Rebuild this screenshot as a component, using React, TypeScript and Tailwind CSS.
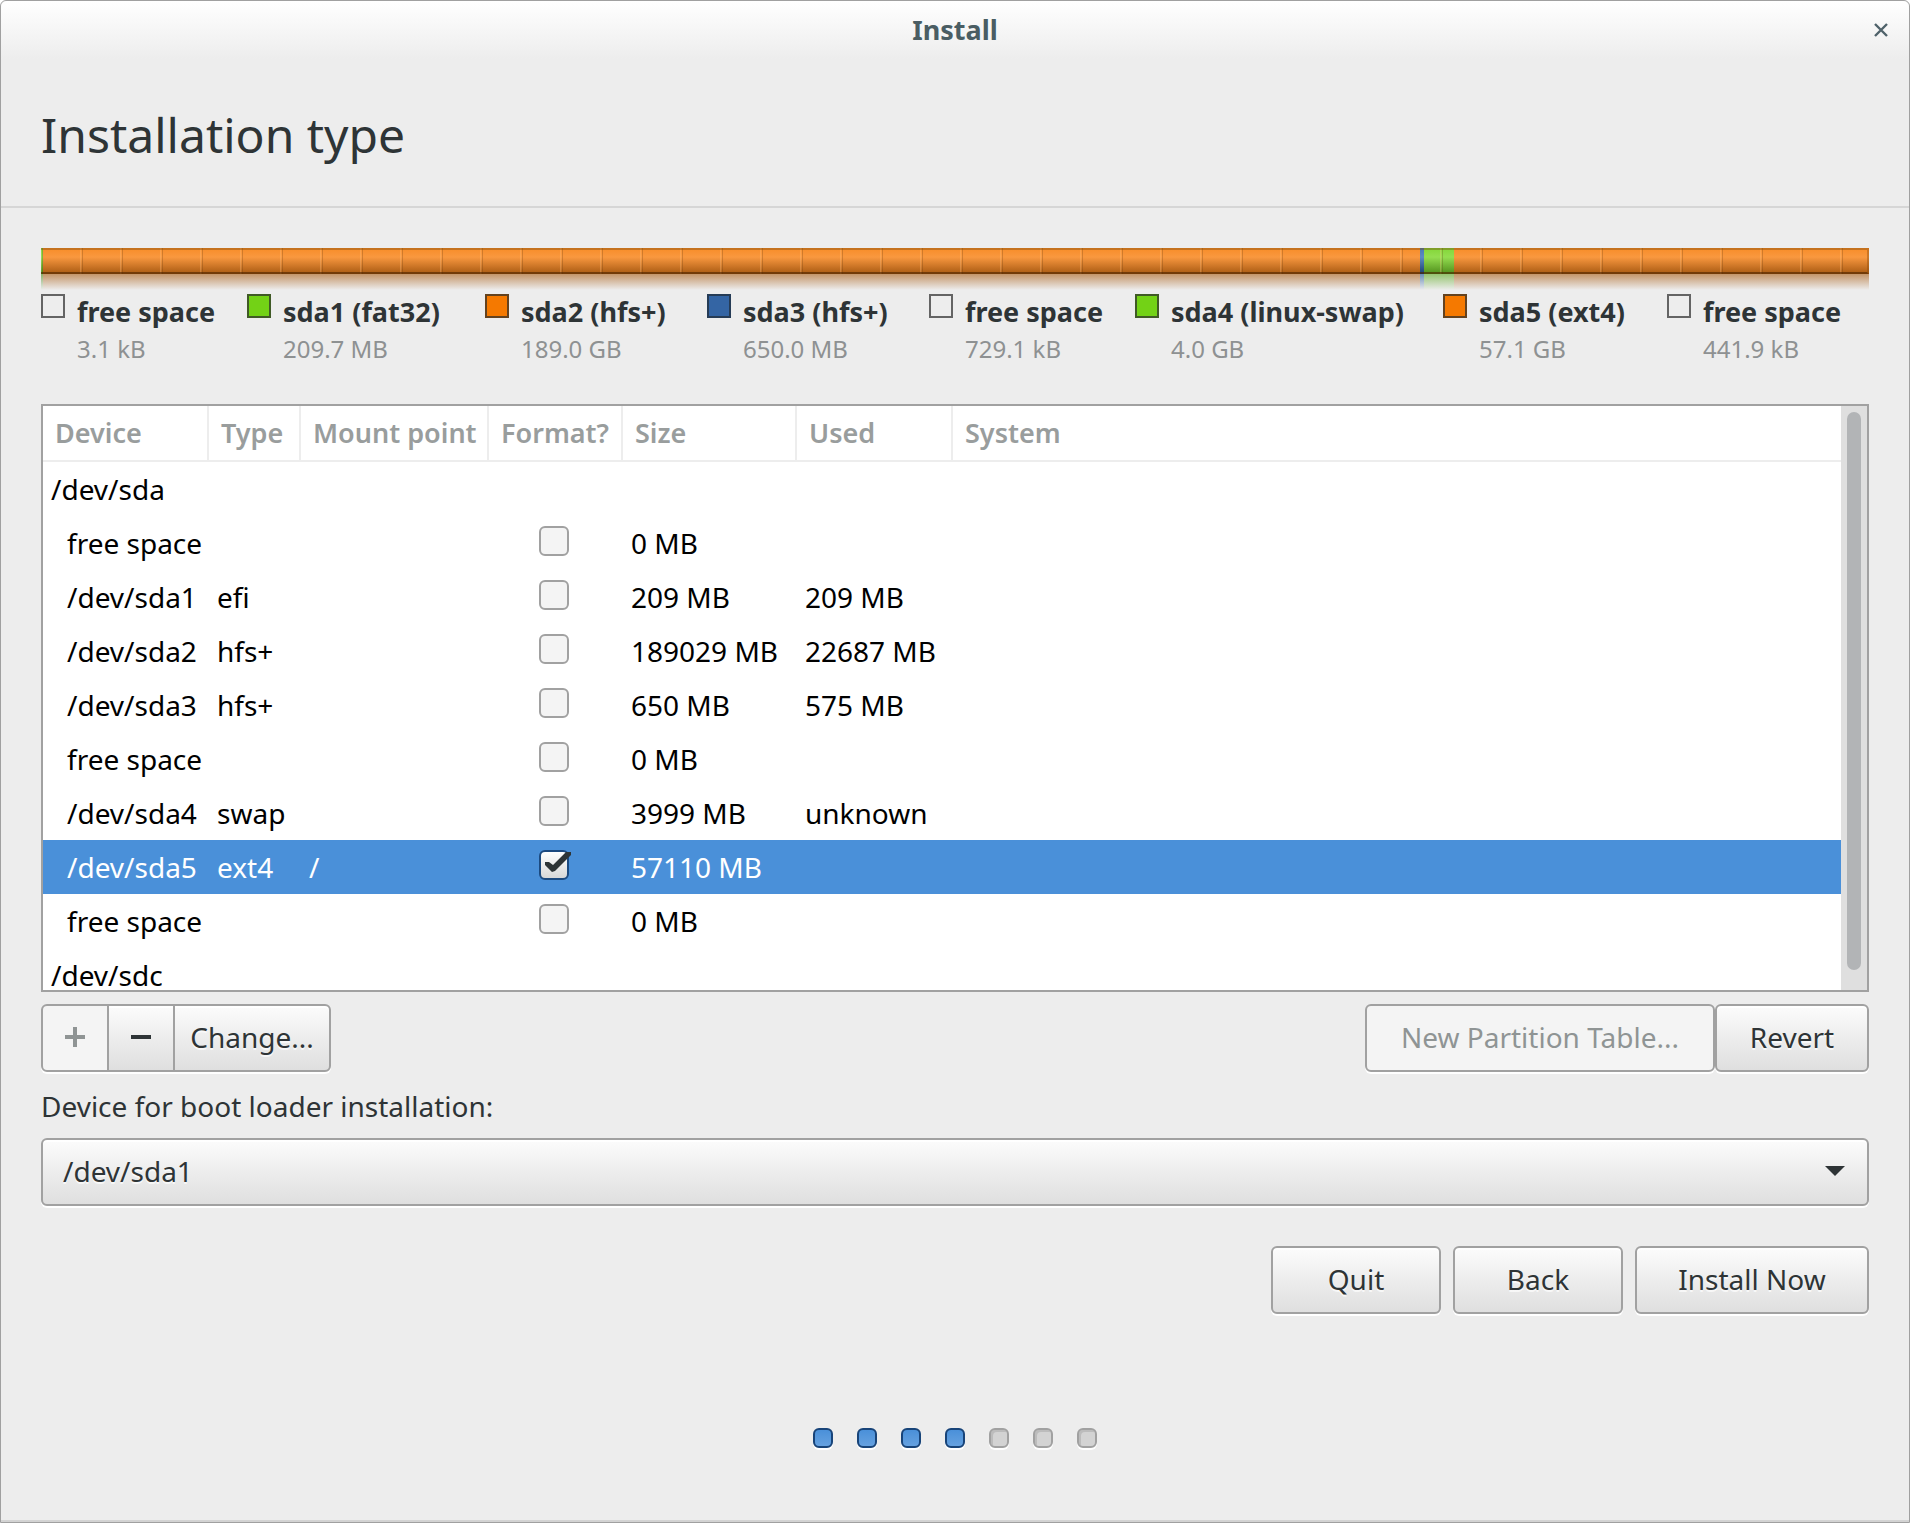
import React from "react";

const BUTTON =
  "h-[68px] rounded-md border-2 border-[#a1a1a1] bg-linear-to-b from-[#fcfcfc] via-[#ededed] to-[#dfdfdf] pb-0.5 text-[#2e3436] shadow-[0_2px_0_#fff,inset_0_2px_0_#fff] [text-shadow:0_2px_0_rgba(255,255,255,0.7)]";
const BUTTON_OFF =
  "h-[68px] rounded-md border-2 border-[#a1a1a1] bg-[#f4f4f4] pb-0.5 text-[#8f9494] shadow-[0_2px_0_#fff]";

const legend = [
  { name: "free space", size: "3.1 kB", color: "bg-transparent border-[#646464]" },
  { name: "sda1 (fat32)", size: "209.7 MB", color: "bg-[#73d216] border-[#405a26]" },
  { name: "sda2 (hfs+)", size: "189.0 GB", color: "bg-[#f57900] border-[#63421f]" },
  { name: "sda3 (hfs+)", size: "650.0 MB", color: "bg-[#3465a4] border-[#263c56]" },
  { name: "free space", size: "729.1 kB", color: "bg-transparent border-[#646464]" },
  { name: "sda4 (linux-swap)", size: "4.0 GB", color: "bg-[#73d216] border-[#405a26]" },
  { name: "sda5 (ext4)", size: "57.1 GB", color: "bg-[#f57900] border-[#63421f]" },
  { name: "free space", size: "441.9 kB", color: "bg-transparent border-[#646464]" },
];

const ORANGE = "bg-linear-to-b from-[#f78c26] via-[#f9983f] via-35% to-[#a85a10]";
const GREEN = "bg-linear-to-b from-[#83d636] via-[#94de50] via-35% to-[#508f1a]";
const BLUE = "bg-linear-to-b from-[#4a79b4] via-[#5c8bc4] via-35% to-[#1d4071]";

const segments = [
  { share: 2, body: GREEN, glow: "from-[#488712]/60" },
  { share: 1377, body: ORANGE, glow: "from-[#a85a10]/60" },
  { share: 4, body: BLUE, glow: "from-[#3465a4]/70" },
  { share: 30, body: GREEN, glow: "from-[#5aa81c]/60" },
  { share: 415, body: ORANGE, glow: "from-[#a85a10]/60" },
];

type Row = {
  device: string;
  root?: boolean;
  type?: string;
  mount?: string;
  checked?: boolean;
  size?: string;
  used?: string;
};

const rows: Row[] = [
  { device: "/dev/sda", root: true },
  { device: "free space", size: "0 MB" },
  { device: "/dev/sda1", type: "efi", size: "209 MB", used: "209 MB" },
  { device: "/dev/sda2", type: "hfs+", size: "189029 MB", used: "22687 MB" },
  { device: "/dev/sda3", type: "hfs+", size: "650 MB", used: "575 MB" },
  { device: "free space", size: "0 MB" },
  { device: "/dev/sda4", type: "swap", size: "3999 MB", used: "unknown" },
  { device: "/dev/sda5", type: "ext4", mount: "/", checked: true, size: "57110 MB" },
  { device: "free space", size: "0 MB" },
  { device: "/dev/sdc", root: true },
];

function TitleBar() {
  return (
    <header className="grid h-[58px] grid-cols-[1fr_auto_1fr] items-center rounded-t-md bg-linear-to-b from-white to-[#ededed] px-5">
      <span />
      <span className="text-[27px] leading-9 font-bold text-[#4a5d63]">Install</span>
      <button type="button" aria-label="Close" className="justify-self-end px-px py-0.5">
        <svg viewBox="0 0 14 14" className="size-3.5">
          <path d="M1 1 L13 13 M13 1 L1 13" stroke="#4f626a" strokeWidth="2.4" fill="none" />
        </svg>
      </button>
    </header>
  );
}

function DiskBar() {
  return (
    <div className="relative">
      <div className="flex">
        {segments.map((s, i) => (
          <div key={i} style={{ flex: `${s.share} 0 0px` }}>
            <div className={`h-[26px] ${s.body}`} />
            <div className={`h-4 bg-linear-to-b to-transparent ${s.glow}`} />
          </div>
        ))}
      </div>
      <div className="absolute inset-x-0 top-0 h-[26px] border-t-2 border-r-2 border-b-2 border-t-[#7a4a10]/40 border-r-[#8a4a08]/40 border-b-[#4c2400]/60 bg-[linear-gradient(90deg,transparent_37px,rgba(255,200,140,0.3)_37px_38px,rgba(255,200,140,0.1)_38px_39px,rgba(90,50,10,0.25)_39px_40px)] bg-[length:40px_100%] bg-[position:2px_0]" />
    </div>
  );
}

function Legend() {
  return (
    <ul className="mt-1 grid grid-cols-[206fr_238fr_222fr_222fr_206fr_308fr_224fr_202fr]">
      {legend.map((l, i) => (
        <li key={i} className="flex gap-3 whitespace-nowrap">
          <span className={`size-6 shrink-0 border-2 ${l.color}`} />
          <span className="flex flex-col">
            <span className="text-[27px] leading-9 font-bold text-[#2e3436]">{l.name}</span>
            <span className="text-[24px] leading-[38px] text-[#8e9192]">{l.size}</span>
          </span>
        </li>
      ))}
    </ul>
  );
}

function FormatBox({ row }: { row: Row }) {
  return (
    <span className="relative mx-auto block size-[30px]">
      <input
        type="checkbox"
        aria-label={`Format ${row.device}`}
        defaultChecked={row.checked}
        disabled={!row.checked}
        className="block size-[30px] appearance-none rounded-md border-2 border-[#a1a1a1] bg-[#f4f4f4] checked:border-[#1c4a80] checked:bg-linear-to-b checked:from-white checked:to-[#d8d8d8]"
      />
      {row.checked && (
        <svg viewBox="0 0 30 30" className="pointer-events-none absolute inset-0 size-[30px] overflow-visible">
          <path d="M6 12 H10 L14 15 L27 2 H32 V5 L16 21 L13 22 L6 15 Z" fill="#2e3436" />
        </svg>
      )}
    </span>
  );
}

function PartitionTable() {
  const heads = ["Device", "Type", "Mount point", "Format?", "Size", "Used", "System"];
  return (
    <div className="mt-9 flex h-[588px] overflow-hidden border-2 border-[#a1a1a1] bg-white">
      <div className="min-w-0 flex-1 overflow-hidden">
        <table className="w-full table-fixed border-separate border-spacing-0 text-left whitespace-nowrap">
          <colgroup>
            <col className="w-[166px]" />
            <col className="w-[92px]" />
            <col className="w-[188px]" />
            <col className="w-[134px]" />
            <col className="w-[174px]" />
            <col className="w-[156px]" />
            <col />
          </colgroup>
          <thead>
            <tr className="h-14 text-[27px] leading-9 text-[#999d9d]">
              {heads.map((h) => (
                <th
                  key={h}
                  className="border-r-2 border-b-2 border-[#ededed] p-0 pl-3 font-semibold last:border-r-0"
                >
                  {h}
                </th>
              ))}
            </tr>
          </thead>
          <tbody className="text-[28px] leading-9">
            {rows.map((r, i) => (
              <tr key={i} className={r.checked ? "h-[54px] bg-[#4a90d9] text-white" : "h-[54px] text-black"}>
                <td className={r.root ? "p-0 pl-2" : "p-0 pl-6"}>{r.device}</td>
                <td className="p-0 pl-2">{r.type}</td>
                <td className="p-0 pl-2">{r.mount}</td>
                <td className="p-0 pr-1 pb-1">{!r.root && <FormatBox row={r} />}</td>
                <td className="p-0 pl-2">{r.size}</td>
                <td className="p-0 pl-2">{r.used}</td>
                <td className="p-0" />
              </tr>
            ))}
          </tbody>
        </table>
      </div>
      <div className="w-[26px] shrink-0 bg-[#dfdfdf] px-1.5 pt-1.5 pb-5">
        <div className="h-full rounded-full bg-[#b2b4b6]" />
      </div>
    </div>
  );
}

export default function App() {
  return (
    <div className="flex min-h-screen flex-col rounded-t-md border border-[#a0a0a0] bg-[#ededed] font-['Noto_Sans',sans-serif] text-[28px] text-[#2e3436] shadow-[inset_0_-2px_0_#d3d3d3]">
      <TitleBar />
      <h1 className="border-b-2 border-[#d6d6d6] px-10 pt-11 pb-[39px] text-[48px] leading-[64px]">
        Installation type
      </h1>
      <main className="flex flex-col px-10 pt-10">
        <DiskBar />
        <Legend />
        <PartitionTable />

        <div className="mt-3 flex justify-between">
          <div className="flex">
            <button type="button" disabled aria-label="Add partition" className={`${BUTTON_OFF} flex w-[68px] items-center justify-center rounded-r-none`}>
              <svg viewBox="0 0 20 20" className="size-5">
                <path d="M8 0h4v8h8v4h-8v8h-4v-8h-8v-4h8z" fill="#8f9494" />
              </svg>
            </button>
            <button type="button" aria-label="Remove partition" className={`${BUTTON} -ml-0.5 flex w-[68px] items-center justify-center rounded-none`}>
              <svg viewBox="0 0 20 20" className="size-5">
                <path d="M0 8h20v4h-20z" fill="#2e3436" />
              </svg>
            </button>
            <button type="button" className={`${BUTTON} -ml-0.5 w-[158px] rounded-l-none`}>
              Change...
            </button>
          </div>
          <div className="flex">
            <button type="button" disabled className={`${BUTTON_OFF} w-[350px]`}>
              New Partition Table...
            </button>
            <button type="button" className={`${BUTTON} w-[154px]`}>
              Revert
            </button>
          </div>
        </div>

        <label htmlFor="boot-device" className="mt-4 leading-9">
          Device for boot loader installation:
        </label>
        <div className="relative mt-3.5">
          <select id="boot-device" className={`${BUTTON} block w-full appearance-none px-5`}>
            <option>/dev/sda1</option>
          </select>
          <svg viewBox="0 0 20 10" className="pointer-events-none absolute top-7 right-6 h-2.5 w-5">
            <path d="M0 0h20l-10 10z" fill="#2e3436" />
          </svg>
        </div>

        <div className="mt-10 flex justify-end gap-3">
          <button type="button" className={`${BUTTON} w-[170px]`}>Quit</button>
          <button type="button" className={`${BUTTON} w-[170px]`}>Back</button>
          <button type="button" className={`${BUTTON} w-[234px]`}>Install Now</button>
        </div>

        <div className="mt-[114px] flex justify-center gap-6 pb-16">
          {[0, 1, 2, 3, 4, 5, 6].map((n) => (
            <span
              key={n}
              className={
                n < 4
                  ? "size-5 rounded-md border-2 border-[#184479] bg-linear-to-b from-[#4a90d9] to-[#65a1e0] shadow-[0_2px_0_#fff]"
                  : "size-5 rounded-md border-2 border-[#a1a1a1] bg-[#d3d3d3] shadow-[0_2px_0_#fff,inset_2px_2px_0_#bcbcbc]"
              }
            />
          ))}
        </div>
      </main>
    </div>
  );
}
